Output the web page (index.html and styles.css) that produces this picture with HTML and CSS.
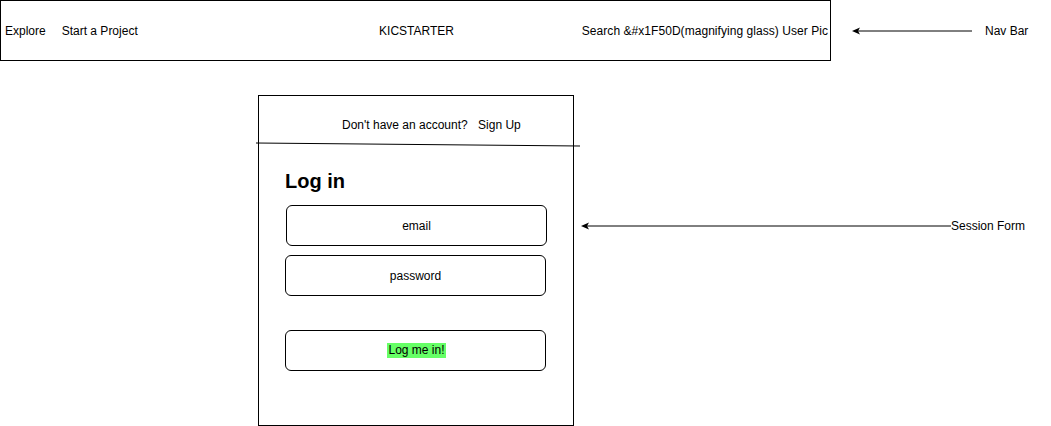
FILE: index.html
```html
<!DOCTYPE html>
<html>
<head>
<meta charset="utf-8">
<link rel="stylesheet" href="styles.css">
</head>
<body>
<div class="canvas">
  <div class="row row-nav">
    <nav class="navbar">
      <div class="nav-left">
        <span class="nav-item">Explore</span>
        <span class="nav-item nav-start">Start a Project</span>
      </div>
      <div class="nav-brand">KICSTARTER</div>
      <div class="nav-right">Search &amp;#x1F50D(magnifying glass) User Pic</div>
    </nav>
    <div class="note note-nav">
      <svg class="arrow arrow-nav" width="120" height="14" viewBox="0 0 120 14">
        <line x1="6" y1="7" x2="120" y2="7" stroke="#000" stroke-width="1"/>
        <path d="M0 7 L8 3.5 L6 7 L8 10.5 Z" fill="#000"/>
      </svg>
      <span class="note-label note-label-nav">Nav Bar</span>
    </div>
  </div>

  <div class="row row-form">
    <div class="session-form">
      <svg class="divider" width="324" height="6" viewBox="0 0 324 6">
        <line x1="0" y1="1" x2="324" y2="4" stroke="#000" stroke-width="1"/>
      </svg>
      <div class="form-header">
        <span>Don't have an account?</span>
        <span class="signup">Sign Up</span>
      </div>
      <h1 class="form-title">Log in</h1>
      <div class="field field-email">email</div>
      <div class="field field-password">password</div>
      <div class="field field-submit"><span class="highlight">Log me in!</span></div>
    </div>
    <div class="note note-form">
      <svg class="arrow arrow-form" width="370" height="14" viewBox="0 0 370 14">
        <line x1="6" y1="7" x2="370" y2="7" stroke="#000" stroke-width="1"/>
        <path d="M0 7 L8 3.5 L6 7 L8 10.5 Z" fill="#000"/>
      </svg>
      <span class="note-label">Session Form</span>
    </div>
  </div>
</div>
</body>
</html>
```

FILE: styles.css
```css
* {
  box-sizing: border-box;
}

html, body {
  margin: 0;
  padding: 0;
  background: #ffffff;
}

body {
  font-family: "Liberation Sans", Arial, Helvetica, sans-serif;
  font-size: 12px;
  color: #000;
  width: 1051px;
  height: 426px;
  overflow: hidden;
}

.canvas {
  display: flex;
  flex-direction: column;
}

.row {
  display: flex;
  align-items: flex-start;
}

/* Nav bar */
.navbar {
  width: 831px;
  height: 61px;
  border: 1px solid #000;
  display: grid;
  grid-template-columns: 1fr auto 1fr;
  align-items: center;
  padding: 0 2px 0 4px;
  line-height: 14px;
}

.nav-left {
  display: flex;
}

.nav-start {
  margin-left: 16px;
}

.nav-brand {
  text-align: center;
}

.nav-right {
  justify-self: end;
  white-space: nowrap;
  letter-spacing: 0.05px;
}

.note {
  display: flex;
  align-items: center;
}

.arrow {
  display: block;
}

.note-nav {
  margin-left: 21px;
  margin-top: 24px;
}

.note-label {
  line-height: 14px;
  white-space: nowrap;
}

.note-label-nav {
  margin-left: 13px;
}

/* Session form */
.row-form {
  margin-top: 34px;
}

.session-form {
  position: relative;
  margin-left: 258px;
  width: 316px;
  height: 331px;
  border: 1px solid #000;
  display: flex;
  flex-direction: column;
  align-items: flex-start;
}

.divider {
  position: absolute;
  left: -3px;
  top: 46px;
  display: block;
}

.form-header {
  height: 47px;
  padding: 22px 0 0 83px;
  line-height: 14px;
  white-space: nowrap;
}

.signup {
  margin-left: 7px;
}

.form-title {
  margin: 26px 0 0 26px;
  font-size: 20px;
  font-weight: bold;
  line-height: 24px;
}

.field {
  width: 261px;
  height: 41px;
  border: 1px solid #000;
  border-radius: 6px;
  display: flex;
  align-items: center;
  justify-content: center;
  line-height: 14px;
  margin-left: 26px;
}

.field-email {
  margin-top: 12px;
  margin-left: 27px;
}

.field-password {
  margin-top: 9px;
}

.field-submit {
  margin-top: 34px;
}

.highlight {
  background: #66ff66;
  padding: 0 1px;
  line-height: 15px;
  margin-left: 2px;
}

.note-form {
  margin-left: 7px;
  margin-top: 124px;
}
```
